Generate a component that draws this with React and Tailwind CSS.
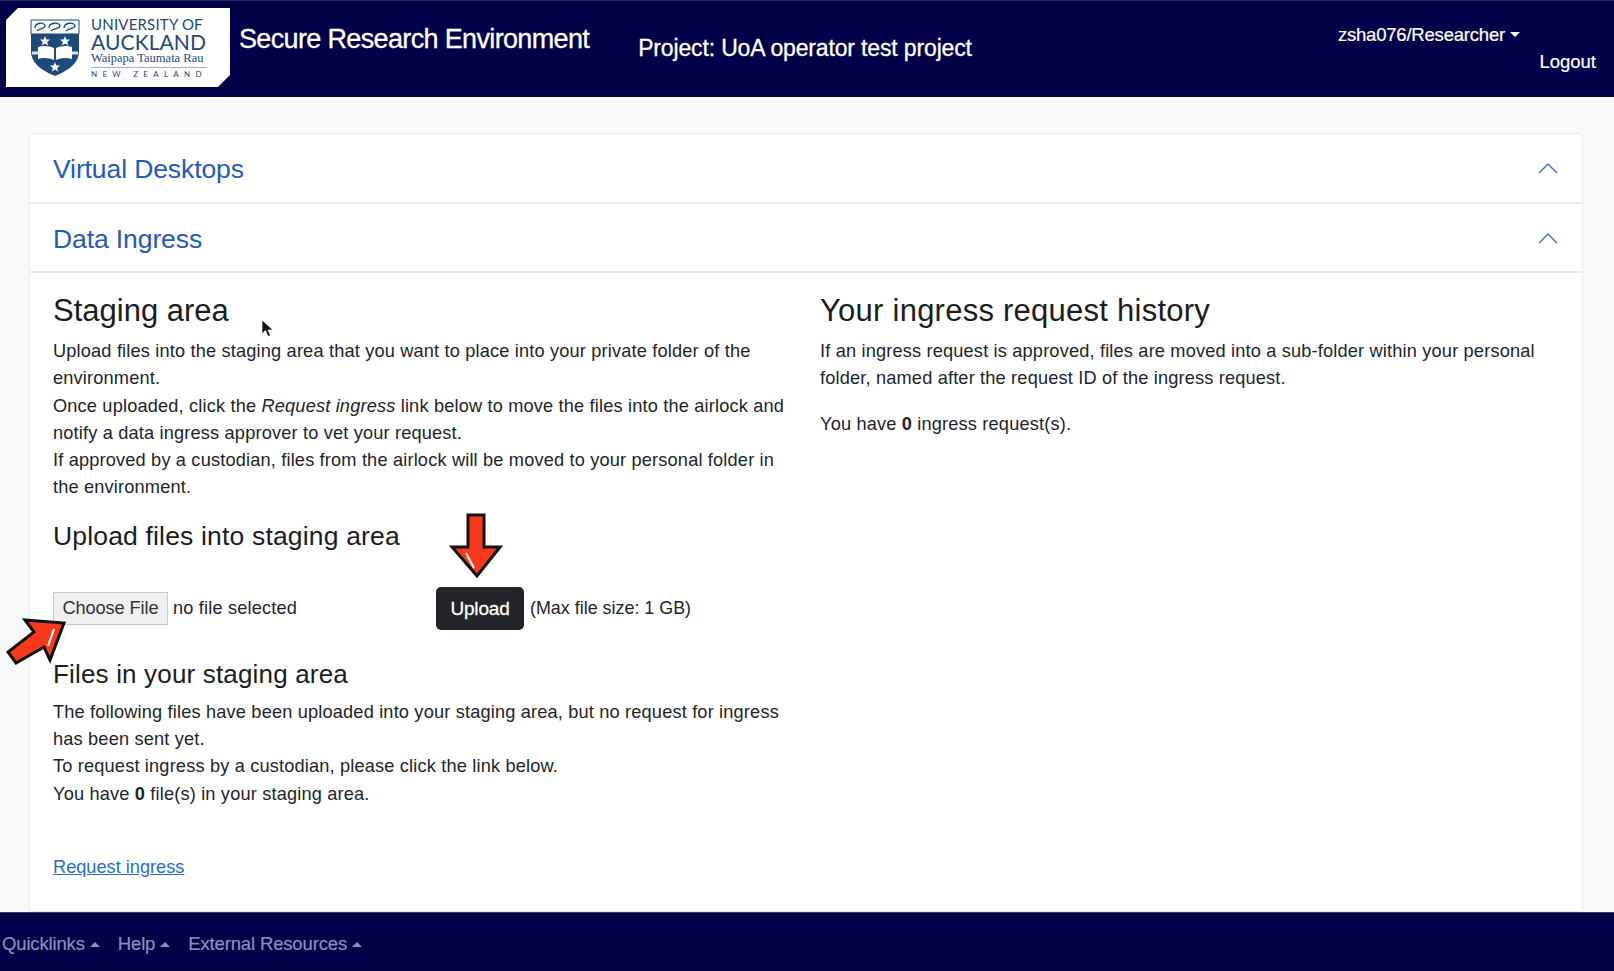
import React from "react";

const Caret = ({ up, className = "" }) => (
  <svg width="10" height="5" viewBox="0 0 10 5" className={className}>
    <path d={up ? "M0 5 L5 0 L10 5 Z" : "M0 0 L5 5 L10 0 Z"} fill="currentColor" />
  </svg>
);

const Chevron = () => (
  <svg width="20" height="12" viewBox="0 0 20 12" fill="none" className="-mt-[2px]">
    <path d="M1 11 L10 2 L19 11" stroke="#4a78bd" strokeWidth="1.5" />
  </svg>
);

const Shield = () => (
  <svg width="50" height="58" viewBox="0 0 50 58">
    <path d="M1 1 H49 V32 C49 45 37 52 25 57 C13 52 1 45 1 32 Z" fill="#1d4a7a" />
    <path d="M1 1 H49 V15 H1 Z" fill="#f4f6f8" stroke="#1d4a7a" strokeWidth="1" />
    <g fill="none" stroke="#1d4a7a" strokeWidth="1.3">
      <path d="M5 9 C5 3 15 3 15 7 C15 10 9 9 7 12" />
      <path d="M19 9 C19 3 30 3 30 7 C30 10 23 9 21 12" />
      <path d="M34 9 C34 3 45 3 45 7 C45 10 38 9 36 12" />
    </g>
    <path d="M15 17 l1.4 3.4 3.6 .2 -2.8 2.3 1 3.5 -3.2 -2 -3.2 2 1 -3.5 -2.8 -2.3 3.6 -.2 Z" fill="#fff" />
    <path d="M35 17 l1.4 3.4 3.6 .2 -2.8 2.3 1 3.5 -3.2 -2 -3.2 2 1 -3.5 -2.8 -2.3 3.6 -.2 Z" fill="#fff" />
    <path d="M25 43 l1.4 3.4 3.6 .2 -2.8 2.3 1 3.5 -3.2 -2 -3.2 2 1 -3.5 -2.8 -2.3 3.6 -.2 Z" fill="#fff" />
    <path d="M8 28 C13 26 20 27 24 29 V41 C20 39 13 38 8 40 Z" fill="#fff" />
    <path d="M42 28 C37 26 30 27 26 29 V41 C30 39 37 38 42 40 Z" fill="#fff" />
    <path d="M2 34 H8 M42 34 H48" stroke="#dfe6ee" strokeWidth="3" />
  </svg>
);

const Logo = () => (
  <div className="w-[224px] h-[79px] bg-white [clip-path:polygon(12px_0,100%_0,100%_67px,212px_100%,0_100%,0_12px)] flex items-center pl-[24px] gap-[11px] shrink-0">
    <Shield />
    <div className="flex flex-col items-start text-[#1d4a7a] mt-[1px] font-['Lato','Liberation_Sans',sans-serif]">
      <div className="text-[15px] leading-[17px] tracking-[0.2px] whitespace-nowrap">UNIVERSITY OF</div>
      <div className="text-[21px] leading-[18px] tracking-[0.1px] whitespace-nowrap">AUCKLAND</div>
      <div className="text-[12.5px] leading-[15px] font-['Liberation_Serif',serif] whitespace-nowrap w-full border-b border-[#9fb2c8] pb-[1px]">Waipapa Taumata Rau</div>
      <div className="text-[8px] leading-[12px] tracking-[5.3px] whitespace-nowrap">NEW ZEALAND</div>
    </div>
  </div>
);

const ArrowDown = () => (
  <svg width="54" height="68" viewBox="0 0 54 68" className="absolute left-[449px] top-[513px]">
    <path d="M19 2 H35 V34 H51 L28 63 L3 34 H19 Z" fill="#f8391c" stroke="#111" strokeWidth="3" />
    <path d="M17 40 L25 55" stroke="#fff" strokeWidth="2" />
  </svg>
);

const ArrowDiag = () => (
  <svg width="62" height="50" viewBox="0 0 62 50" className="absolute left-[6px] top-[618px]">
    <path d="M19 2 L58 5 L44 42 L38 29 L10 45 L2 34 L28 14 Z" fill="#f8391c" stroke="#111" strokeWidth="3" />
    <path d="M48 11 L42 28" stroke="#fff" strokeWidth="2" />
  </svg>
);

const Cursor = () => (
  <svg width="14" height="20" viewBox="0 0 14 20" className="absolute left-[261px] top-[319px]">
    <path d="M1 1 V15 L4.5 11.5 L7 17.5 L9.5 16.5 L7 11 H12 Z" fill="#111" stroke="#fff" strokeWidth="0.7" />
  </svg>
);

const AccHeader = ({ children, first }) => (
  <div className={first ? "h-[70px] flex items-center justify-between pl-[23px] pr-[24px] pt-[2px] border-b-2 border-[#e9eaec]" : "h-[69px] flex items-center justify-between pl-[23px] pr-[24px] pt-[2px] border-b-2 border-[#e9eaec]"}>
    <span className="text-[26.5px] text-[#2459bd] tracking-[-0.1px] mt-[2px]">{children}</span>
    <Chevron />
  </div>
);

export default function App() {
  return (
    <div className="h-[971px] w-[1614px] overflow-hidden flex flex-col bg-[#f6f8fa] font-['Liberation_Sans',Arial,sans-serif] text-[#212529] relative">
      <header className="h-[97px] shrink-0 bg-[#03004a] text-white flex items-start pl-[6px] pt-[7px] border-t border-[#2c2a5e]">
        <Logo />
        <div className="ml-[9px] mt-[12px] text-[27px] leading-[38px] tracking-[-0.65px] [-webkit-text-stroke:0.3px] whitespace-nowrap">Secure Research Environment</div>
        <div className="ml-[49px] mt-[24px] text-[23px] leading-[32px] tracking-[-0.15px] [-webkit-text-stroke:0.3px] whitespace-nowrap">Project: UoA operator test project</div>
        <div className="ml-auto pr-[18px] pt-[13px] flex flex-col items-end">
          <div className="flex items-center gap-[5px] text-[18.5px] leading-[27px] tracking-[-0.2px] [-webkit-text-stroke:0.2px] mr-[76px]">
            zsha076/Researcher <Caret />
          </div>
          <div className="mt-[0px] text-[18.5px] leading-[27px] tracking-[0px] [-webkit-text-stroke:0.2px]">Logout</div>
        </div>
      </header>

      <main className="flex-1 min-h-0 overflow-hidden pt-[36px] px-[29px]">
        <div className="w-[1554px] h-full bg-white border border-[#e9eaec] rounded-t-[5px] flex flex-col">
          <AccHeader first>Virtual Desktops</AccHeader>
          <AccHeader>Data Ingress</AccHeader>
          <div className="flex pl-[23px] pt-[19px] text-[18.2px] leading-[27.3px] tracking-[0.17px]">
            <section className="w-[767px] shrink-0">
              <h2 className="text-[31px] leading-[38px] tracking-[0px] mb-[8px] text-[#1a1d20]">Staging area</h2>
              <p className="w-[740px]">
                Upload files into the staging area that you want to place into your private folder of the environment.<br />
                Once uploaded, click the <em>Request ingress</em> link below to move the files into the airlock and notify a data ingress approver to vet your request.<br />
                If approved by a custodian, files from the airlock will be moved to your personal folder in the environment.
              </p>
              <h3 className="text-[26.5px] leading-[34px] mt-[17px] text-[#1a1d20]">Upload files into staging area</h3>
              <div className="flex items-center mt-[34px] h-[44px]">
                <div className="w-[115px] h-[33px] bg-[#efefef] border border-[#c9c9c9] flex items-center justify-center text-[18.2px] tracking-[-0.1px] text-[#333]">Choose File</div>
                <span className="ml-[5px] w-[263px]">no file selected</span>
                <div className="w-[88px] h-[43px] bg-[#212529] rounded-[5px] flex items-center justify-center text-white text-[19px] tracking-[-0.2px] [-webkit-text-stroke:0.3px]">Upload</div>
                <span className="ml-[6px] text-[17.9px] tracking-[0px]">(Max file size: 1 GB)</span>
              </div>
              <h3 className="text-[26px] leading-[34px] mt-[26px] text-[#1a1d20]">Files in your staging area</h3>
              <p className="mt-[8px] w-[740px]">
                The following files have been uploaded into your staging area, but no request for ingress has been sent yet.<br />
                To request ingress by a custodian, please click the link below.<br />
                You have <b>0</b> file(s) in your staging area.
              </p>
              <a className="block mt-[46px] tracking-[0px] text-[#2a6ecb] underline">Request ingress</a>
            </section>
            <section className="w-[725px]">
              <h2 className="text-[31px] leading-[38px] tracking-[0.25px] mb-[8px] text-[#1a1d20]">Your ingress request history</h2>
              <p>
                If an ingress request is approved, files are moved into a sub-folder within your personal folder, named after the request ID of the ingress request.
              </p>
              <p className="mt-[18px]">You have <b>0</b> ingress request(s).</p>
            </section>
          </div>
        </div>
      </main>

      <footer className="h-[59px] shrink-0 bg-[#03004a] text-[#8f8dba] flex items-center pl-[2px] gap-[18px] text-[18.5px] tracking-[-0.15px] [-webkit-text-stroke:0.2px] border-t border-[#3a3a6a] pt-[4px]">
        <span className="flex items-center gap-[5px]">Quicklinks <Caret up /></span>
        <span className="flex items-center gap-[5px]">Help <Caret up /></span>
        <span className="flex items-center gap-[5px]">External Resources <Caret up /></span>
      </footer>

      <ArrowDown />
      <ArrowDiag />
      <Cursor />
    </div>
  );
}
